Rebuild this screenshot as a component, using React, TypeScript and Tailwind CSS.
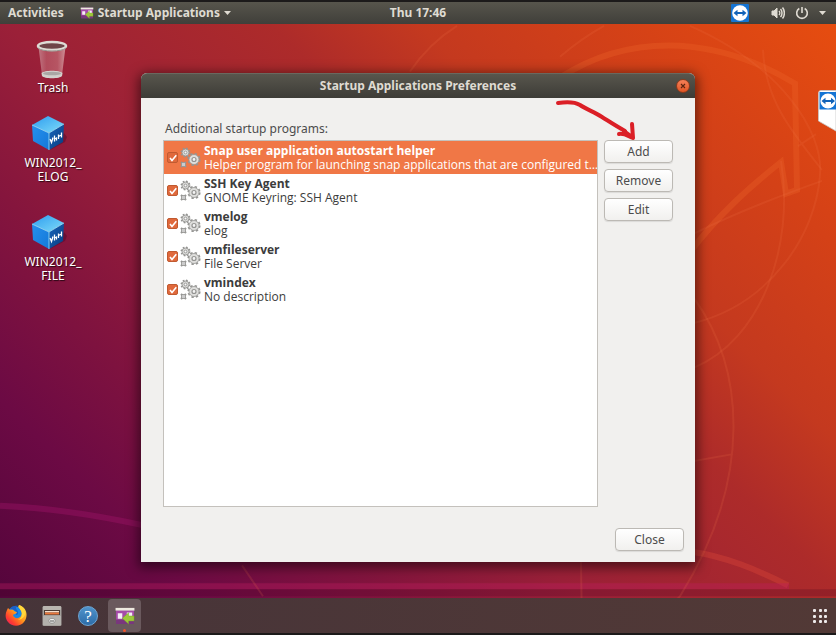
import { useState } from "react";

type Program = { id: string; name: string; description: string };

const programs: Program[] = [
  {
    id: "snap",
    name: "Snap user application autostart helper",
    description: "Helper program for launching snap applications that are configured t…",
  },
  { id: "ssh", name: "SSH Key Agent", description: "GNOME Keyring: SSH Agent" },
  { id: "vmelog", name: "vmelog", description: "elog" },
  { id: "vmfileserver", name: "vmfileserver", description: "File Server" },
  { id: "vmindex", name: "vmindex", description: "No description" },
];

function Wallpaper() {
  return (
    <svg
      className="absolute inset-0 h-full w-full"
      viewBox="0 0 836 635"
      preserveAspectRatio="none"
      fill="none"
      aria-hidden="true"
    >
      <g stroke="#f0682c" strokeOpacity="0.3" strokeWidth="6">
        <path d="M560 76C600 50 640 42 680 44c44 3 84 19 115 38l2 107-11 4-5-32c-30 24-62 52-92 92" />
      </g>
      <g stroke="#e8503c" strokeOpacity="0.3" strokeWidth="6">
        <path d="M690 553c36 5 66 18 98 34" />
      </g>
      <path d="M0 507c50 2 95 9 145 20" stroke="#a01468" strokeOpacity="0.4" strokeWidth="6" />
      <path d="M0 588h789" stroke="#c01c60" strokeOpacity="0.35" strokeWidth="6" />
      <path d="M0 591h836v7H0z" fill="#400020" fillOpacity="0.22" />
      <g stroke="#f0784a" strokeOpacity="0.16" strokeWidth="2">
        <path d="M410 70c12-18 28-34 47-46M560 55c14-12 28-22 44-31" />
        <path d="M690 24c90 40 134 106 130 150-4 60-50 130-126 149" />
        <path d="M763 48c2 50 28 82 59 121M798 145l18-12M694 233c40-20 86-38 128-53" />
        <path d="M781 160c14 86-20 180-87 208" />
        <path d="M694 298c50 70 60 180-14 300l-34 36M694 462l39-7" />
        <path d="M242 567l21 31M581 563l1 72" />
      </g>
    </svg>
  );
}

function StartupIcon({ className }: { className: string }) {
  return (
    <svg className={className} viewBox="0 0 22 20" aria-hidden="true">
      <rect x="1" y="1" width="20" height="18" rx="1" fill="#79377d" />
      <rect x="1" y="4" width="20" height="10" fill="#a54ba8" />
      <rect x="0.500" y="1" width="21" height="3" fill="#eeeae0" />
      <path d="M3 7h5v6H3zM13 6h6v5h-6z" fill="#f5eef5" />
      <path d="M8 12.500l7-6v3.500h6v5.500h-6v3.500z" fill="#9dc93a" stroke="#79a524" strokeWidth=".5" />
    </svg>
  );
}

function RemoteIcon({ className }: { className: string }) {
  return (
    <svg className={className} viewBox="0 0 18 18" aria-hidden="true">
      <rect width="18" height="18" rx="1" fill="#1474d4" />
      <circle cx="9" cy="9" r="7.800" fill="#fff" />
      <path d="M2.500 9l4-3.200v2.200h5V5.800l4 3.200-4 3.200V10h-5v2.200z" fill="#1263b8" />
    </svg>
  );
}

function TrashIcon() {
  return (
    <svg className="h-10 w-[38px]" viewBox="-6 0 38 40" aria-hidden="true">
      <defs>
        <linearGradient id="bin" x1="0" x2="1" y1="0" y2="0">
          <stop offset="0" stopColor="#d8b0b4" stopOpacity=".6" />
          <stop offset=".3" stopColor="#c87880" stopOpacity=".5" />
          <stop offset=".7" stopColor="#c87880" stopOpacity=".6" />
          <stop offset="1" stopColor="#e8c8c8" stopOpacity=".65" />
        </linearGradient>
      </defs>
      <path d="M2.500 7l3.500 28c0 4 20 4 20 0l3.500-28z" fill="url(#bin)" />
      <path d="M5.500 33c3-3 18-3 21 0l-.5 3c-2 3-18 3-20 0z" fill="#d2d0cc" />
      <ellipse cx="16" cy="33.500" rx="9" ry="1.800" fill="#aaa7a5" />
      <ellipse cx="16" cy="6" rx="14" ry="4" fill="#6f4548" stroke="#dedbd5" strokeWidth="2.500" />
      <path d="M2 8c4 4 24 4 28 0" fill="none" stroke="#96928d" strokeWidth="1" />
    </svg>
  );
}

function DiskIcon() {
  return (
    <svg className="h-9 w-9" viewBox="0 0 36 36" aria-hidden="true">
      <defs>
        <linearGradient id="cubeTop" x1="0" y1="0" x2="1" y2="1">
          <stop offset="0" stopColor="#2d9cf0" />
          <stop offset="1" stopColor="#7fdcf8" />
        </linearGradient>
        <linearGradient id="cubeLeft" x1="0" y1="0" x2="1" y2="1">
          <stop offset="0" stopColor="#2590ee" />
          <stop offset="1" stopColor="#1478d8" />
        </linearGradient>
        <linearGradient id="cubeRight" x1="0" y1="0" x2="1" y2="1">
          <stop offset="0" stopColor="#1766bd" />
          <stop offset="1" stopColor="#083a7c" />
        </linearGradient>
      </defs>
      <path d="M19 35l15-8 2-5-3-4z" fill="#300020" fillOpacity=".3" />
      <path d="M1 10L17 1l16 8-15 9z" fill="url(#cubeTop)" />
      <path d="M1 10l17 8v17L2 26z" fill="url(#cubeLeft)" />
      <path d="M18 18l15-9-1 18-14 8z" fill="url(#cubeRight)" />
      <path d="M1 10l17 8 15-9M18 18v17" fill="none" stroke="#9ce4fc" strokeWidth=".8" />
      <g fill="none" stroke="#fff" strokeWidth="1.300">
        <path d="M19 24l1.500 3.500 1.500-5M23.500 20.500v6M23.500 24l2-1v2.500M27.500 19.500v4.500M27.500 21.500l3-1.500M30.500 17.500v5" />
      </g>
    </svg>
  );
}

function GearsIcon() {
  return (
    <svg className="h-[22px] w-[21px] shrink-0" viewBox="0 0 21 22" fill="none" aria-hidden="true">
      <g stroke="#949492">
        <circle cx="5.500" cy="5.500" r="4.200" strokeWidth="1.600" strokeDasharray="1.700 1.600" />
        <circle cx="5.500" cy="5.500" r="3.500" fill="#dcdcda" strokeWidth=".9" />
        <circle cx="5.500" cy="5.500" r="1.400" fill="#f8f8f8" strokeWidth=".9" />
        <circle cx="14" cy="12.500" r="5.800" strokeWidth="1.600" strokeDasharray="2.400 2.150" />
        <circle cx="14" cy="12.500" r="5" fill="#dededc" strokeWidth=".8" />
        <circle cx="14" cy="12.500" r="2" fill="#f5f5f5" strokeWidth="1.200" />
        <path d="M1 15l5 5M6 15l-5 5" strokeWidth="2" />
        <rect x="1.500" y="15.500" width="4" height="4" fill="#ccc" strokeWidth=".8" />
      </g>
    </svg>
  );
}

function FirefoxIcon() {
  return (
    <svg className="h-[22px] w-[22px]" viewBox="0 0 22 22" aria-hidden="true">
      <defs>
        <linearGradient id="fox" x1="1" y1="0" x2="0" y2="1">
          <stop offset="0" stopColor="#fff04a" />
          <stop offset=".45" stopColor="#ff9a1c" />
          <stop offset=".75" stopColor="#ff3b30" />
          <stop offset="1" stopColor="#e31575" />
        </linearGradient>
      </defs>
      <circle cx="10.500" cy="10" r="8.500" fill="#1688e8" />
      <path d="M2 5l1-2 2 2c2-1 4 0 4 1l3 1c0 2-4 2-4 3 1 4 6 4 8 1 2-4-1-7-3-9l1-2c9 3 9 12 5 17-4 5-12 5-16 0C0 13 0 9 2 5z" fill="url(#fox)" />
      <path d="M5 4c1-3 5-4 9-3-3 0-4 2-2 4 2 3 1 5-1 5l1-3c-2 0-2-3-7-3z" fill="#1c5fc8" />
      <path d="M14 0c-1 3 3 5 3 9 0 3-2 5-4 6 5-1 8-4 7-9-1-3-3-5-6-6z" fill="#ffd83c" />
    </svg>
  );
}

function FilesIcon() {
  return (
    <svg className="h-[22px] w-[22px]" viewBox="0 0 22 22" aria-hidden="true">
      <rect x="1.500" y="1" width="19" height="20" rx="1.500" fill="#a5a19d" />
      <rect x="2" y="1" width="18" height="4" rx="1" fill="#b9b5b0" />
      <rect x="3" y="5" width="16" height="5" fill="#4b3a34" />
      <path d="M4 6h14v1.500H4z" fill="#f4decc" />
      <path d="M4 7.500h14V9.500H4z" fill="#e8773c" />
      <path d="M2 11h18v9H2z" fill="#b4b1ad" />
      <rect x="8" y="13.500" width="6" height="4.500" rx="2" fill="#f3f3f1" stroke="#777" strokeWidth=".6" />
      <path d="M9 16h4" stroke="#555" />
    </svg>
  );
}

function DesktopItem({ icon, lines }: { icon: React.ReactNode; lines: string[] }) {
  return (
    <button
      type="button"
      className="flex w-20 flex-col items-center gap-px text-[12px] leading-[14px] text-white [text-shadow:1px_1px_1px_#000000b0]"
    >
      <span className="flex h-10 w-full justify-center pr-2">{icon}</span>
      <span>
        {lines.map((line) => (
          <span key={line} className="block">
            {line}
          </span>
        ))}
      </span>
    </button>
  );
}

function PushButton({ children }: { children: string }) {
  return (
    <button
      type="button"
      className="h-[23px] w-[69px] rounded border border-[#bcb9b4] bg-linear-to-b from-white to-[#f1f0ee] text-[12px] leading-4 text-[#4c4c4c] shadow-[0_1px_1px_#00000018]"
    >
      {children}
    </button>
  );
}

function ProgramRow({ program, selected, onSelect }: { program: Program; selected: boolean; onSelect: () => void }) {
  const [enabled, setEnabled] = useState(true);
  return (
    <li
      onClick={onSelect}
      className={
        selected
          ? "flex h-[33px] items-center gap-0.5 bg-[#f07746] pl-[3px] text-white"
          : "flex h-[33px] items-center gap-0.5 pl-[3px] text-[#3c3c3c]"
      }
    >
      <span className="grid shrink-0 place-items-center">
        <input
          id={program.id}
          type="checkbox"
          checked={enabled}
          onChange={() => setEnabled(!enabled)}
          className="col-start-1 row-start-1 h-[11px] w-[11px] appearance-none rounded-xs border border-[#c05a30] bg-[#e0693c]"
        />
        {enabled && (
          <svg className="pointer-events-none col-start-1 row-start-1 h-2 w-2" viewBox="0 0 8 8" aria-hidden="true">
            <path d="M1 4l2 2.500L7.300 1.200" fill="none" stroke="#fff" strokeWidth="1.600" />
          </svg>
        )}
      </span>
      <GearsIcon />
      <label htmlFor={program.id} className="min-w-0 whitespace-nowrap pl-px text-[12px] leading-[14px] [font-family:'Open_Sans','Noto_Sans',sans-serif]">
        <span className="block font-bold">{program.name}</span>
        <span className="block">{program.description}</span>
      </label>
    </li>
  );
}

function PreferencesWindow() {
  const [selected, setSelected] = useState("snap");
  return (
    <section className="relative flex w-[554px] flex-col self-start rounded-t-md bg-[#f1f0ee] shadow-[0_3px_12px_3px_#00000080]">
      <header className="grid h-[25px] grid-cols-[1fr_auto_1fr] items-center rounded-t-md border-t border-[#6a685f] bg-linear-to-b from-[#58564d] to-[#3d3c37] px-[5px]">
        <h1 className="col-start-2 text-[12px] leading-4 font-bold text-[#dfdbd2]">Startup Applications Preferences</h1>
        <button
          type="button"
          aria-label="Close window"
          className="grid h-[14px] w-[14px] place-items-center justify-self-end rounded-full border border-[#8c3a1c] bg-linear-to-b from-[#f58058] to-[#e25420]"
        >
          <svg className="h-1.5 w-1.5" viewBox="0 0 6 6" aria-hidden="true">
            <path d="M1 1l4 4M5 1L1 5" stroke="#5c2410" strokeWidth="1.100" />
          </svg>
        </button>
      </header>
      <div className="flex flex-col px-[22px] pt-[23px]">
        <h2 className="pb-[3px] pl-0.5 text-[12px] leading-4 text-[#4c4c4c]">Additional startup programs:</h2>
        <div className="flex gap-1.5">
          <ul className="h-[367px] min-w-0 flex-1 overflow-hidden border border-[#c4c1bc] bg-white">
            {programs.map((program) => (
              <ProgramRow
                key={program.id}
                program={program}
                selected={selected === program.id}
                onSelect={() => setSelected(program.id)}
              />
            ))}
          </ul>
          <div className="flex flex-col gap-1.5">
            <PushButton>Add</PushButton>
            <PushButton>Remove</PushButton>
            <PushButton>Edit</PushButton>
          </div>
        </div>
      </div>
      <footer className="flex justify-end px-[11px] pt-[21px] pb-[11px]">
        <PushButton>Close</PushButton>
      </footer>
      <svg
        className="pointer-events-none absolute top-6 right-[55px] h-11 w-[86px]"
        viewBox="0 0 86 44"
        fill="none"
        stroke="#db1f26"
        strokeWidth="4"
        strokeLinecap="round"
        strokeLinejoin="round"
        aria-hidden="true"
      >
        <path d="M4 6c7-1 17-1 22 2 6 4 14 7 22 12 8 5 14 9 23 14" />
        <path d="M65 37c5-1 9 2 14 4l-1-14M70 34l8 6" />
      </svg>
    </section>
  );
}

export default function App() {
  return (
    <div className="relative flex min-h-screen flex-col overflow-hidden border-y-2 border-[#1c1a1a] bg-[linear-gradient(45deg,#50043a_0%,#6c0a44_16%,#85153d_30%,#9b2038_42%,#ad2b2a_60%,#c4391f_70%,#d64216_85%,#e84e0f_100%)] [font-family:'Noto_Sans','Open_Sans',sans-serif]">
      <Wallpaper />
      <header className="relative grid h-[22px] grid-cols-[1fr_auto_1fr] items-center bg-linear-to-b from-[#57554c] to-[#403f3a] px-2 text-[12px] leading-4 font-bold text-[#dfdbd2]">
        <div className="flex items-center gap-4">
          <button type="button">Activities</button>
          <button type="button" className="flex items-center gap-1">
            <StartupIcon className="h-3 w-3.5" />
            Startup Applications
            <svg className="h-1 w-[7px]" viewBox="0 0 7 4" aria-hidden="true">
              <path d="M0 0h7L3.500 4z" fill="currentColor" />
            </svg>
          </button>
        </div>
        <time>Thu 17:46</time>
        <div className="flex items-center justify-end pr-0.5">
          <button type="button" aria-label="Remote control" className="mr-[22px]">
            <RemoteIcon className="h-[18px] w-[18px]" />
          </button>
          <button type="button" aria-label="System menu" className="flex items-center gap-2.5">
            <svg className="h-3.5 w-3.5" viewBox="0 0 14 14" fill="none" stroke="currentColor" strokeWidth="1.500" aria-hidden="true">
              <path d="M1 5h2l3-3v10L3 9H1z" fill="currentColor" strokeWidth="1" />
              <path d="M8 5c1 1 1 3 0 4M9.500 3c2 2 2 6 0 8M11.500 1.500c2.500 3 2.500 8 0 11" />
            </svg>
            <svg className="h-3.5 w-3.5" viewBox="0 0 14 14" fill="none" stroke="currentColor" strokeWidth="1.600" aria-hidden="true">
              <path d="M4.300 2.500a5.300 5.300 0 1 0 5.400 0M7 1v6" />
            </svg>
            <svg className="h-1 w-[7px]" viewBox="0 0 7 4" aria-hidden="true">
              <path d="M0 0h7L3.500 4z" fill="currentColor" />
            </svg>
          </button>
        </div>
      </header>

      <main className="relative flex flex-1 justify-center pt-[49px] pb-6">
        <div className="absolute top-4 left-[13px]">
          <DesktopItem icon={<TrashIcon />} lines={["Trash"]} />
        </div>
        <div className="absolute top-[91px] left-[13px]">
          <DesktopItem icon={<DiskIcon />} lines={["WIN2012_", "ELOG"]} />
        </div>
        <div className="absolute top-[190px] left-[13px]">
          <DesktopItem icon={<DiskIcon />} lines={["WIN2012_", "FILE"]} />
        </div>
        <PreferencesWindow />
        <button type="button" aria-label="Remote control panel" className="absolute top-[66px] right-0 h-[42px] w-[18px]">
          <svg className="h-full w-full" viewBox="0 0 18 42" aria-hidden="true">
            <path d="M18 .5H3Q.5.500.5 3v28L18 41z" fill="#fff" stroke="#c8c8c8" strokeWidth=".8" />
            <path d="M1.500 2H18v17.500H1.500z" fill="#1474d4" />
            <circle cx="10" cy="11" r="7.600" fill="#fff" />
            <path d="M3.500 11l4-3.300v2.300H13V7.700l4 3.300-4 3.300V12H7.500v2.300z" fill="#1263b8" />
          </svg>
        </button>
      </main>

      <nav aria-label="Dock" className="relative flex h-[35px] items-center bg-linear-to-r from-[#463439] to-[#523936] pr-2">
        <button type="button" aria-label="Firefox" className="grid w-9 place-items-center pr-1">
          <FirefoxIcon />
        </button>
        <button type="button" aria-label="Files" className="grid w-9 place-items-center pr-1">
          <FilesIcon />
        </button>
        <button type="button" aria-label="Help" className="grid w-9 place-items-center pr-1">
          <span className="grid h-5 w-5 place-items-center rounded-full border border-[#6ea6d4] bg-linear-to-b from-[#4f93cb] to-[#2d6ca8] text-[17px] leading-5 text-white [font-family:'Liberation_Serif',serif]">
            ?
          </span>
        </button>
        <button
          type="button"
          aria-label="Startup Applications"
          className="relative grid h-[33px] w-[33px] place-items-center rounded-sm bg-[#6a595d]"
        >
          <StartupIcon className="h-[18px] w-[22px]" />
          <span className="absolute bottom-0 h-[3px] w-[3px] rounded-full bg-[#f0532a]" />
        </button>
        <button type="button" aria-label="Show applications" className="ml-auto">
          <svg className="h-4 w-4" viewBox="0 0 16 16" fill="#eeeaea" aria-hidden="true">
            {[1, 7, 12].map((y) =>
              [1, 7, 12].map((x) => <rect key={`${x}-${y}`} x={x} y={y} width="3" height="3" rx="1" />),
            )}
          </svg>
        </button>
      </nav>
    </div>
  );
}
